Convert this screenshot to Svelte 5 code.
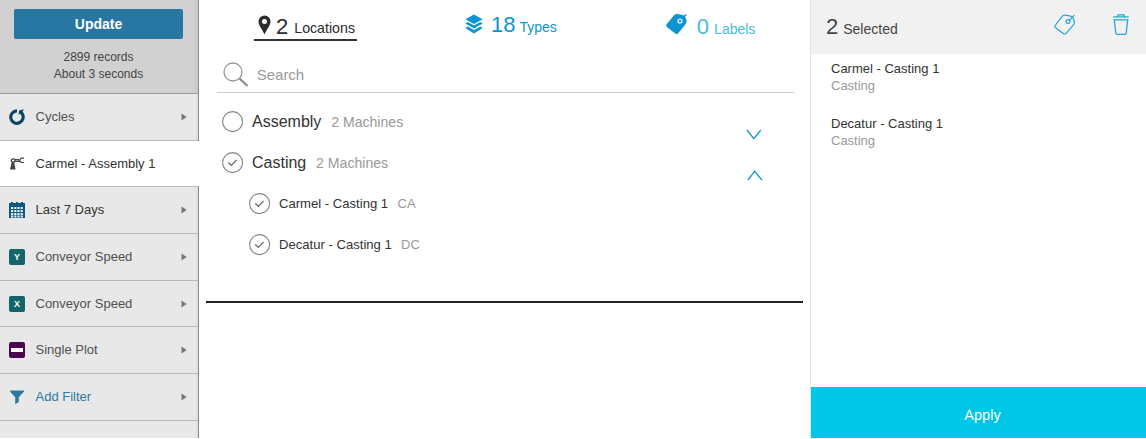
<script>
  const filters = [
    { icon: 'cycle', label: 'Cycles' },
    { icon: 'robot', label: 'Carmel - Assembly 1', active: true },
    { icon: 'calendar', label: 'Last 7 Days', dark: true },
    { icon: 'axis', letter: 'Y', label: 'Conveyor Speed' },
    { icon: 'axis', letter: 'X', label: 'Conveyor Speed' },
    { icon: 'plot', label: 'Single Plot' },
    { icon: 'funnel', label: 'Add Filter', link: true }
  ];
  const groups = [
    { name: 'Assembly', count: '2 Machines', checked: false, machines: [] },
    {
      name: 'Casting', count: '2 Machines', checked: true,
      machines: [
        { name: 'Carmel - Casting 1', code: 'CA' },
        { name: 'Decatur - Casting 1', code: 'DC' }
      ]
    }
  ];
  const selected = ['Carmel - Casting 1', 'Decatur - Casting 1'];
</script>

{#snippet check(on)}
  <svg class="check" width="22" height="22" viewBox="0 0 22 22" fill="none" stroke="#858585">
    <circle cx="10.600" cy="10.600" r="10" stroke-width="1.1" />
    {#if on}<path d="M6.300 10.500l3 3 5.200-5.500" stroke="#666" stroke-width="1.2" />{/if}
  </svg>
{/snippet}

<div class="app">
  <aside>
    <div class="summary">
      <button class="update">Update</button>
      <div class="stats">2899 records<br />About 3 seconds</div>
    </div>
    {#each filters as f}
      <div class="filter" class:active={f.active} class:dark={f.dark} class:link={f.link}>
        <span class="ficon">
          {#if f.icon === 'cycle'}
            <svg width="16" height="16" viewBox="0 0 16 16">
              <path d="M8 1.900A6.200 6.200 0 1 0 13 4.500" fill="none" stroke="#0d4560" stroke-width="3.1" />
              <path d="M9.500 5.800l.6-4.300L14.800.3l-1.200 2.500 1.200 2-2.500 1.500-1-1.500z" fill="#0d4560" />
            </svg>
          {:else if f.icon === 'robot'}
            <svg width="16" height="16" viewBox="0 0 16 16" fill="none" stroke="#444">
              <path d="M1 13.500h5.500L5.200 6H2.700z" fill="#444" stroke="none" />
              <circle cx="4.200" cy="4.600" r="1.800" stroke-width="1.300" />
              <path d="M5.700 3.700h4.300M5.700 5.300h4.300M15 2.200h-2.800l-1.900 2.200 1.900 2.100H15" stroke-width="1.200" />
            </svg>
          {:else if f.icon === 'calendar'}
            <svg width="16" height="16" viewBox="0 0 16 16">
              <path d="M0 1h2V0h2v1h3V0h2v1h3V0h2v1h2v15H0z" fill="#0e5884" />
              <path d="M2 6h12M2 9h12M2 12h12M2 14.500h12" stroke="#e8eff3" stroke-width="1.900" stroke-dasharray="2.200 1" />
            </svg>
          {:else if f.icon === 'axis'}
            <span class="axis">{f.letter}</span>
          {:else if f.icon === 'plot'}
            <span class="plot"></span>
          {:else}
            <svg width="16" height="16" viewBox="0 0 16 16" fill="#2c7aa2">
              <path d="M1 1.500h14v1L9.800 8.300v5L6.200 15V8.300L1 2.500z" />
            </svg>
          {/if}
        </span>
        <span class="flabel">{f.label}</span>
        {#if !f.active}
          <svg class="arrow" width="6" height="8" viewBox="0 0 6 8"><path d="M.5.5v7L5.700 4z" fill="#777" /></svg>
        {/if}
      </div>
    {/each}
  </aside>

  <main>
    <nav>
      <div class="tab current">
        <svg width="13" height="20" viewBox="0 0 13 20"><path d="M6.500.5a6 6 0 0 0-6 6c0 4.200 4 8 6 13 2-5 6-8.800 6-13a6 6 0 0 0-6-6zm0 8.500a2.500 2.500 0 1 1 0-5 2.500 2.500 0 0 1 0 5z" fill="#2b2b2b" /></svg>
        <b>2</b><span>Locations</span>
      </div>
      <div class="tab types">
        <svg width="18" height="20" viewBox="0 0 18 20" fill="#0c95d2">
          <path d="M9 .5l8.700 4.800L9 10.100.3 5.300z" />
          <path d="M.3 9.500l2.500-1.400L9 11.500l6.200-3.400 2.500 1.400L9 14.500z" />
          <path d="M.3 14l2.500-1.400L9 16l6.200-3.400L17.700 14 9 19.500z" />
        </svg>
        <b>18</b><span>Types</span>
      </div>
      <div class="tab labels">
        <svg width="22" height="22" viewBox="0 0 22 22">
          <path d="M.8 11L8.300 2.100q1-1.200 2.600-1l4.700.6q2 .3 3.200 1.800 1.300 2 1.700 4.200.4 1.700-.8 3.200l-7.500 9.300q-1.400 1.500-3 .3L1.200 14.200q-1.800-1.500-.4-3.200z" fill="#0c95d2" />
          <circle cx="14" cy="8" r="2" fill="none" stroke="#fff" stroke-width="1.200" />
          <path d="M16.500 5.200l3.800-3.800" stroke="#0c95d2" stroke-width="1.400" />
        </svg>
        <b>0</b><span>Labels</span>
      </div>
    </nav>

    <div class="search">
      <svg width="26" height="26" viewBox="0 0 26 26" fill="none" stroke="#999">
        <circle cx="10" cy="10" r="9" stroke-width="1.300" />
        <path d="M16.500 16.500l8 7.500" stroke="#8c8c8c" stroke-width="2.200" />
      </svg>
      <span>Search</span>
    </div>

    <div class="tree">
      {#each groups as g}
        <div class="node">
          {@render check(g.checked)}
          <span class="name">{g.name}</span><span class="count">{g.count}</span>
          <svg class="chevron" class:up={g.checked} width="16" height="11" viewBox="0 0 16 11" fill="none" stroke="#1b9bd7" stroke-width="1.400"><path d="M.8 1l7 8.700L14.800 1" /></svg>
        </div>
        {#each g.machines as m}
          <div class="node leaf">
            {@render check(true)}
            <span class="name">{m.name}</span><span class="count">{m.code}</span>
          </div>
        {/each}
      {/each}
    </div>
    <div class="rule"></div>
  </main>

  <section>
    <header>
      <b>2</b><span>Selected</span>
      <svg class="tag" width="22" height="22" viewBox="0 0 22 22" fill="none" stroke="#25a5d8" stroke-width="1.200">
        <path d="M1.500 11L8.500 2.200q1-1.200 2.600-1l4.500.6q2 .3 3.200 1.800 1.200 2 1.600 4.100.4 1.600-.8 3l-7.400 8.600q-1.400 1.400-2.900.2L1.900 14q-1.700-1.300-.4-3z" />
        <circle cx="14" cy="7.500" r="1.900" />
        <path d="M15.300 6.200l5-5" />
      </svg>
      <svg class="trash" width="16" height="22" viewBox="0 0 16 22" fill="none" stroke="#25a5d8" stroke-width="1.300">
        <path d="M.3 2.800h15.400M5 2.600V.8h6v1.800M.5 5.800h15M1.300 6l1.500 13q.2 1.300 1.500 1.300h7.400q1.300 0 1.500-1.300l1.500-13" />
      </svg>
    </header>
    <div class="picked">
      {#each selected as s}
        <div class="item"><div>{s}</div><div class="kind">Casting</div></div>
      {/each}
    </div>
    <button class="apply">Apply</button>
  </section>
</div>

<style>
  :global(body) { margin: 0; background: #fff; }
  .app {
    display: flex; width: 1146px; height: 438px; overflow: hidden;
    font-family: "Liberation Sans", Arial, sans-serif; color: #333; font-size: 13px;
  }
  * { box-sizing: border-box; }
  svg { flex: none; display: block; }
  button { border: 0; padding: 0; font-family: inherit; }

  aside {
    flex: none; width: 199px; height: 438px;
    background: linear-gradient(90deg, #e8e8e8 0 195px, #dedede 198px, #888 198px);
  }
  .summary {
    height: 94px; padding: 9px 4px 0 14px; margin-right: 1px; border-bottom: 1px solid #999;
    background: linear-gradient(90deg, #d1d1d1 192px, #c8c8c8);
    display: flex; flex-direction: column; align-items: flex-start;
  }
  .update {
    width: 169px; height: 30px; border-radius: 2px; background: #2876a2; color: #fff;
    font-size: 14px; font-weight: bold; line-height: 30px;
  }
  .stats { width: 169px; margin-top: 10px; text-align: center; font-size: 12px; line-height: 17px; color: #444; }
  .filter {
    height: 46.700px; margin-right: 1px; padding: 0 11px 0 9px; border-bottom: 1px solid #bbb;
    display: flex; align-items: center; color: #505050;
  }
  .filter.active { margin-right: 0; background: #fff; color: #333; }
  .filter.dark { color: #333; }
  .filter.link { color: #2c7aa2; }
  .ficon { width: 16px; height: 16px; margin-right: 10.500px; }
  .flabel { flex: 1; white-space: nowrap; line-height: 16px; }
  .axis {
    display: block; height: 16px; border-radius: 2px; background: #126568; color: #fff;
    font-size: 9px; font-weight: bold; line-height: 17px; text-align: center;
  }
  .plot {
    display: block; height: 16px; border-radius: 2px; border: solid #4b0650; border-width: 6px 2px; background: #fff;
  }

  main { flex: none; width: 611px; padding-left: 7px; }
  nav { display: flex; height: 41px; padding-left: 48px; }
  .tab { display: flex; height: 41px; white-space: nowrap; }
  b { font-weight: normal; font-size: 22px; line-height: 25px; }
  .tab span { font-size: 14.200px; line-height: 16px; }
  .current { width: 103px; border-bottom: 2px solid #333; padding: 15px 0 0 4px; color: #2b2b2b; }
  .current b { margin: -1px 6px 0 5px; }
  .current span { margin-top: 5px; }
  .types { margin-left: 108px; padding-top: 14px; color: #0c95d2; }
  .types b { margin: -2px 4px 0 8px; }
  .types span { margin-top: 5px; font-size: 14px; }
  .labels { margin-left: 109px; padding-top: 13px; color: #45bce0; }
  .labels b { margin: 1px 5px 0 9px; }
  .labels span { margin-top: 8px; font-size: 14px; }
  .search {
    width: 577px; height: 52px; margin-left: 11px; padding: 21px 0 0 6px; border-bottom: 1px solid #ccc;
    display: flex; color: #999; font-size: 15px;
  }
  .search span { margin: 4px 0 0 7.700px; line-height: 18px; }
  .tree { padding: 8px 48.500px 0 16px; }
  .node { height: 41px; display: flex; align-items: center; white-space: nowrap; }
  .name { font-size: 16px; margin-left: 8px; line-height: 20px; }
  .count { font-size: 14.100px; margin-left: 9.800px; color: #999; line-height: 20px; }
  .chevron { margin: 26px 0 0 auto; }
  .chevron.up { transform: translateX(1px) scaleY(-1); }
  .leaf { padding-left: 27px; }
  .leaf .name { font-size: 13.100px; }
  .leaf .count { font-size: 13.100px; margin-left: 9.300px; }
  .rule { width: 597px; height: 2px; margin-top: 36px; background: #222; }

  section {
    flex: none; width: 336px; height: 438px; border-left: 1px solid #e4e4e4; display: flex; flex-direction: column;
  }
  header {
    height: 54px; background: #f1f1f1; display: flex; padding: 14px 17px 0 15px; color: #444;
  }
  header span { margin: 7px 0 0 5px; font-size: 14px; line-height: 16px; }
  .tag { margin-left: auto; }
  .trash { margin-left: 37px; }
  .picked { flex: 1; padding: 6px 20px 0; }
  .item { height: 55px; line-height: 17px; }
  .kind { color: #999; }
  .apply { height: 51px; background: #00c6e8; color: #fff; font-size: 14.500px; padding: 5px 0 0 8px; }
</style>
